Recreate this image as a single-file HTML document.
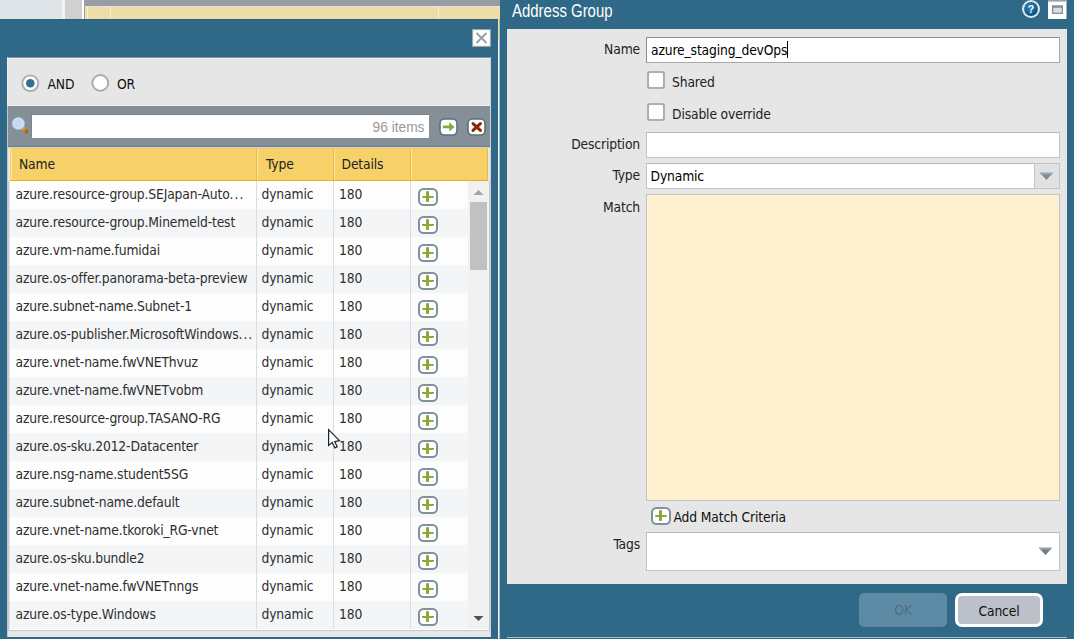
<!DOCTYPE html><html><head><meta charset="utf-8"><title>Address Group</title><style>
*{box-sizing:border-box;margin:0;padding:0}
html,body{width:1074px;height:639px;overflow:hidden;background:#dcdcdc}
body{position:relative;font-family:"DejaVu Sans Condensed","DejaVu Sans","Liberation Sans",sans-serif;font-size:13.75px;font-stretch:condensed;letter-spacing:-.15px;color:#2e2e2e}
.a{position:absolute}
.t{position:absolute;white-space:nowrap;line-height:16px;height:16px}
.lbl{position:absolute;white-space:nowrap;line-height:16px;height:16px;text-align:right;width:120px;left:520px;color:#222}
.inp{position:absolute;background:#fff;border:1px solid #c4c4c4;border-top-color:#b9b9b9}
.row{position:absolute;left:10px;width:458px;height:28px}
.row.e{background:#fdfdfd}.row.o{background:#f4f5f7}
.row .t{top:5px}
.plus{position:absolute;width:20px;height:18px;border:2px solid #7f929e;border-radius:5.5px;background:#fff}
.plus:before{content:"";position:absolute;left:1.9px;top:5.6px;width:12.2px;height:2.5px;background:#8fa737;border-radius:1px}
.plus:after{content:"";position:absolute;left:6.3px;top:1.3px;width:3.2px;height:11.2px;background:#8fa737;border-radius:1px}
.vl{position:absolute;width:1px;background:#d9dde1}
</style></head><body>
<div class="a" style="left:0;top:0;width:62px;height:40px;background:#dfe4e9"></div>
<div class="a" style="left:62px;top:0;width:3px;height:40px;background:#f2f2f2"></div>
<div class="a" style="left:65px;top:0;width:17px;height:40px;background:#d0d0d0"></div>
<div class="a" style="left:82px;top:0;width:2px;height:40px;background:#fff"></div>
<div class="a" style="left:83.5px;top:0;width:1.5px;height:40px;background:#9a9fa8"></div>
<div class="a" style="left:85px;top:0;width:420px;height:6px;background:#979ca5"></div>
<div class="a" style="left:85px;top:5.5px;width:420px;height:1.5px;background:#e8e4d8"></div>
<div class="a" style="left:85px;top:7px;width:420px;height:33px;background:#f0dca6"></div>
<div class="a" style="left:87px;top:7px;width:1px;height:33px;background:#f8edcf"></div>
<div class="a" style="left:110px;top:7px;width:1px;height:33px;background:#f8edcf"></div>
<div class="a" style="left:438px;top:7px;width:1px;height:33px;background:#f8edcf"></div>
<div class="a" style="left:0;top:19px;width:498px;height:620px;background:#2f6987;border-top:1px solid #28607f"></div>
<svg class="a" style="left:472px;top:29px" width="19" height="18" viewBox="0 0 19 18"><rect x="0.5" y="0.5" width="18" height="17" fill="#fff" stroke="#9da6ae" stroke-width="1.3"/><path d="M4.5 4 L14.5 14 M14.5 4 L4.5 14" stroke="#97a2ac" stroke-width="2.1" fill="none"/></svg>
<div class="a" style="left:7px;top:57px;width:484px;height:580px;background:#e6e6e6;border-left:1px solid #efefef;border-right:1px solid #d0d3d8;border-top:1px solid #8497a3"></div>
<div class="a" style="left:8px;top:58px;width:482px;height:1px;background:#f0f0f0"></div>
<div class="a" style="left:8px;top:105px;width:482px;height:1px;background:#f0f0f0"></div>
<div class="a" style="left:7px;top:106px;width:1px;height:531px;background:#c4c7ce"></div>
<svg class="a" style="left:21px;top:74px" width="19" height="19" viewBox="0 0 19 19"><circle cx="9.3" cy="9.2" r="7.9" fill="#fff" stroke="#a0abb3" stroke-width="1.8"/><circle cx="9.3" cy="9.2" r="4.3" fill="#37708f"/></svg>
<div class="t" style="left:47.5px;top:76px;color:#111">AND</div>
<svg class="a" style="left:91px;top:74px" width="19" height="19" viewBox="0 0 19 19"><circle cx="9.3" cy="8.9" r="7.9" fill="#fff" stroke="#a0abb3" stroke-width="1.8"/></svg>
<div class="t" style="left:117px;top:76px;color:#111">OR</div>
<div class="a" style="left:8px;top:106px;width:482px;height:41px;background:#858f98;border-bottom:1px solid #6f7a84"></div>
<div class="a" style="left:8px;top:147px;width:482px;height:1px;background:#d5d8dc"></div>
<svg class="a" style="left:10px;top:114px" width="20" height="22" viewBox="0 0 20 22"><defs><radialGradient id="lg" cx="50%" cy="45%" r="60%"><stop offset="0" stop-color="#d6e6f8"/><stop offset="0.7" stop-color="#c4daf4"/><stop offset="1" stop-color="#a9c6ea"/></radialGradient><linearGradient id="hg" x1="0" y1="0" x2="1" y2="1"><stop offset="0" stop-color="#d9a05a"/><stop offset="1" stop-color="#a8671c"/></linearGradient></defs><path d="M13.2 14.4 L16.4 17.3" stroke="url(#hg)" stroke-width="4.3" stroke-linecap="round"/><circle cx="8.4" cy="9.5" r="6.1" fill="#c3d8f3" stroke="#b4ccee" stroke-width="0.7"/><circle cx="8.4" cy="9.5" r="4.7" fill="none" stroke="#cfe1f7" stroke-width="1.2"/></svg>
<div class="a" style="left:31px;top:114px;width:398px;height:24.3px;background:#fff;border-top:1px solid #79838c;border-left:1px solid #79838c"></div>
<div class="t" style="left:340px;width:84.5px;text-align:right;top:120px;font-family:'Liberation Sans',sans-serif;font-stretch:normal;font-size:13.75px;letter-spacing:0;color:#999">96 items</div>
<svg class="a" style="left:439px;top:118px" width="19" height="18" viewBox="0 0 19 18"><rect x="1" y="1" width="17" height="16" rx="4.5" fill="#fff" stroke="#587280" stroke-width="1.6"/><path d="M3.8 8.9 H11" stroke="#8ba63a" stroke-width="2.7"/><path d="M10.2 4.2 L15.6 8.9 L10.2 13.6 Z" fill="#8ba63a"/></svg>
<svg class="a" style="left:467px;top:118px" width="19" height="18" viewBox="0 0 19 18"><rect x="1" y="1" width="17" height="16" rx="4.5" fill="#fff" stroke="#587280" stroke-width="1.6"/><path d="M6 5.6 L13.4 12.4 M13.4 5.6 L6 12.4" stroke="#8b2703" stroke-width="3" stroke-linecap="round"/></svg>
<div class="a" style="left:10px;top:148px;width:478px;height:33px;background:#f6d169;border-bottom:1.5px solid #f0ab1e;border-top:1px solid #f3c75a"></div>
<div class="a" style="left:11px;top:149px;width:1px;height:31px;background:#fbe6a8"></div>
<div class="a" style="left:257px;top:149px;width:1px;height:31px;background:#fbe6a8"></div>
<div class="a" style="left:334px;top:149px;width:1px;height:31px;background:#fbe6a8"></div>
<div class="a" style="left:411px;top:149px;width:1px;height:31px;background:#fbe6a8"></div>
<div class="a" style="left:256px;top:149px;width:1px;height:31px;background:#eeb93c"></div>
<div class="a" style="left:333px;top:149px;width:1px;height:31px;background:#eeb93c"></div>
<div class="a" style="left:410px;top:149px;width:1px;height:31px;background:#eeb93c"></div>
<div class="a" style="left:487px;top:149px;width:1px;height:31px;background:#eeb93c"></div>
<div class="t" style="left:19px;top:156px;color:#222">Name</div>
<div class="t" style="left:266px;top:156px;color:#222">Type</div>
<div class="t" style="left:341.5px;top:156px;color:#222">Details</div>
<div class="row e" style="top:181px"><div class="t" style="left:5.5px">azure.resource-group.SEJapan-Auto<span style="letter-spacing:1px">...</span></div><div class="t" style="left:251.5px">dynamic</div><div class="t" style="left:329px">180</div><div class="plus" style="left:408px;top:7px"></div></div>
<div class="row o" style="top:209px"><div class="t" style="left:5.5px">azure.resource-group.Minemeld-test</div><div class="t" style="left:251.5px">dynamic</div><div class="t" style="left:329px">180</div><div class="plus" style="left:408px;top:7px"></div></div>
<div class="row e" style="top:237px"><div class="t" style="left:5.5px">azure.vm-name.fumidai</div><div class="t" style="left:251.5px">dynamic</div><div class="t" style="left:329px">180</div><div class="plus" style="left:408px;top:7px"></div></div>
<div class="row o" style="top:265px"><div class="t" style="left:5.5px">azure.os-offer.panorama-beta-preview</div><div class="t" style="left:251.5px">dynamic</div><div class="t" style="left:329px">180</div><div class="plus" style="left:408px;top:7px"></div></div>
<div class="row e" style="top:293px"><div class="t" style="left:5.5px">azure.subnet-name.Subnet-1</div><div class="t" style="left:251.5px">dynamic</div><div class="t" style="left:329px">180</div><div class="plus" style="left:408px;top:7px"></div></div>
<div class="row o" style="top:321px"><div class="t" style="left:5.5px">azure.os-publisher.MicrosoftWindows<span style="letter-spacing:1px">...</span></div><div class="t" style="left:251.5px">dynamic</div><div class="t" style="left:329px">180</div><div class="plus" style="left:408px;top:7px"></div></div>
<div class="row e" style="top:349px"><div class="t" style="left:5.5px">azure.vnet-name.fwVNEThvuz</div><div class="t" style="left:251.5px">dynamic</div><div class="t" style="left:329px">180</div><div class="plus" style="left:408px;top:7px"></div></div>
<div class="row o" style="top:377px"><div class="t" style="left:5.5px">azure.vnet-name.fwVNETvobm</div><div class="t" style="left:251.5px">dynamic</div><div class="t" style="left:329px">180</div><div class="plus" style="left:408px;top:7px"></div></div>
<div class="row e" style="top:405px"><div class="t" style="left:5.5px">azure.resource-group.TASANO-RG</div><div class="t" style="left:251.5px">dynamic</div><div class="t" style="left:329px">180</div><div class="plus" style="left:408px;top:7px"></div></div>
<div class="row o" style="top:433px"><div class="t" style="left:5.5px">azure.os-sku.2012-Datacenter</div><div class="t" style="left:251.5px">dynamic</div><div class="t" style="left:329px">180</div><div class="plus" style="left:408px;top:7px"></div></div>
<div class="row e" style="top:461px"><div class="t" style="left:5.5px">azure.nsg-name.student5SG</div><div class="t" style="left:251.5px">dynamic</div><div class="t" style="left:329px">180</div><div class="plus" style="left:408px;top:7px"></div></div>
<div class="row o" style="top:489px"><div class="t" style="left:5.5px">azure.subnet-name.default</div><div class="t" style="left:251.5px">dynamic</div><div class="t" style="left:329px">180</div><div class="plus" style="left:408px;top:7px"></div></div>
<div class="row e" style="top:517px"><div class="t" style="left:5.5px">azure.vnet-name.tkoroki_RG-vnet</div><div class="t" style="left:251.5px">dynamic</div><div class="t" style="left:329px">180</div><div class="plus" style="left:408px;top:7px"></div></div>
<div class="row o" style="top:545px"><div class="t" style="left:5.5px">azure.os-sku.bundle2</div><div class="t" style="left:251.5px">dynamic</div><div class="t" style="left:329px">180</div><div class="plus" style="left:408px;top:7px"></div></div>
<div class="row e" style="top:573px"><div class="t" style="left:5.5px">azure.vnet-name.fwVNETnngs</div><div class="t" style="left:251.5px">dynamic</div><div class="t" style="left:329px">180</div><div class="plus" style="left:408px;top:7px"></div></div>
<div class="row o" style="top:601px"><div class="t" style="left:5.5px">azure.os-type.Windows</div><div class="t" style="left:251.5px">dynamic</div><div class="t" style="left:329px">180</div><div class="plus" style="left:408px;top:7px"></div></div>
<div class="vl" style="left:256px;top:181px;height:448px"></div>
<div class="vl" style="left:333px;top:181px;height:448px"></div>
<div class="vl" style="left:410px;top:181px;height:448px"></div>
<div class="a" style="left:468px;top:181px;width:21px;height:448px;background:#f1f1f1"></div>
<div class="a" style="left:470px;top:202px;width:17px;height:68px;background:#c1c1c1"></div>
<svg class="a" style="left:473px;top:189px" width="11" height="7" viewBox="0 0 11 7"><path d="M0.5 6 L5.5 1 L10.5 6 Z" fill="#a3a3a3"/></svg>
<svg class="a" style="left:473px;top:615px" width="11" height="7" viewBox="0 0 11 7"><path d="M0.5 1 L5.5 6 L10.5 1 Z" fill="#505050"/></svg>
<div class="a" style="left:9px;top:629px;width:481px;height:1px;background:#fff"></div>
<div class="a" style="left:8px;top:630px;width:482px;height:1px;background:#c6c8ce"></div>
<div class="a" style="left:8px;top:181px;width:1px;height:450px;background:#c6c8ce"></div>
<div class="a" style="left:489px;top:181px;width:1px;height:450px;background:#c6c8ce"></div>
<div class="a" style="left:498px;top:40px;width:1px;height:599px;background:#f3f3f3"></div>
<div class="a" style="left:499px;top:40px;width:1px;height:599px;background:#a9bac5"></div>
<div class="a" style="left:498px;top:19px;width:1px;height:21px;background:#f0dca6"></div>
<div class="a" style="left:499px;top:19px;width:1px;height:21px;background:#b9b79a"></div>
<div class="a" style="left:500px;top:0;width:574px;height:639px;background:#2f6987"></div>
<div class="a" style="left:512px;top:-1.5px;height:24px;line-height:24px;font-family:'Liberation Sans',sans-serif;font-stretch:normal;font-size:19px;letter-spacing:0;color:#fff;white-space:nowrap;transform-origin:0 0;transform:scaleX(.787)">Address Group</div>
<svg class="a" style="left:1021px;top:0" width="20" height="19" viewBox="0 0 20 19"><defs><radialGradient id="hb" cx="40%" cy="35%" r="70%"><stop offset="0" stop-color="#2f86bd"/><stop offset="1" stop-color="#0b4a78"/></radialGradient></defs><circle cx="10" cy="9" r="9" fill="#dbe6f1"/><circle cx="10" cy="9" r="6.9" fill="url(#hb)"/><text x="10" y="12.7" text-anchor="middle" font-family="Liberation Sans, sans-serif" font-weight="bold" font-size="10.5" fill="#fff">?</text></svg>
<svg class="a" style="left:1048px;top:0" width="19" height="19" viewBox="0 0 19 19"><rect x="0" y="0" width="19" height="19" fill="#fff"/><rect x="0" y="0" width="19" height="1.6" fill="#9aa0a8"/><rect x="18" y="0" width="1" height="19" fill="#a7adb4"/><rect x="4.6" y="6.3" width="9.8" height="7" fill="#dadde2" stroke="#858e9b" stroke-width="1.3"/><rect x="4" y="5.5" width="11" height="2.2" fill="#808a97"/></svg>
<div class="a" style="left:507px;top:29px;width:560px;height:554.5px;background:#e6e6e6"></div>
<div class="lbl" style="top:41px">Name</div>
<div class="inp" style="left:646px;top:37px;width:414px;height:26px;border-color:#8f8f8f #a8a8a8 #a8a8a8 #8f8f8f"></div>
<div class="t" style="left:651px;top:42px;color:#000">azure_staging_devOps</div>
<div class="a" style="left:787px;top:41px;width:1px;height:17px;background:#000"></div>
<div class="a" style="left:647px;top:71px;width:18px;height:18px;background:#fff;border:2px solid #a4b0b9;border-radius:3px"></div>
<div class="t" style="left:672px;top:74px;color:#222">Shared</div>
<div class="a" style="left:647px;top:103px;width:18px;height:18px;background:#fff;border:2px solid #a4b0b9;border-radius:3px"></div>
<div class="t" style="left:672px;top:106px;color:#222">Disable override</div>
<div class="lbl" style="top:136px">Description</div>
<div class="inp" style="left:646px;top:132px;width:414px;height:26px"></div>
<div class="lbl" style="top:167px">Type</div>
<div class="inp" style="left:646px;top:163px;width:414px;height:26px"></div>
<div class="a" style="left:1034px;top:163px;width:26px;height:26px;background:#e1e1e1;border:1px solid #c4c4c4"></div>
<svg class="a" style="left:1039px;top:172px" width="15" height="9" viewBox="0 0 15 9"><path d="M0.8 0.8 L14.2 0.8 L7.5 8 Z" fill="#7e8c99"/><path d="M0.8 0.8 L14.2 0.8 L12.5 2.4 L2.5 2.4Z" fill="#9aa7b2"/></svg>
<div class="t" style="left:650.5px;top:168px;color:#000">Dynamic</div>
<div class="lbl" style="top:199px">Match</div>
<div class="a" style="left:646px;top:194px;width:414px;height:307px;background:#fff1d0;border:1px solid #c3c3c3"></div>
<div class="plus" style="left:651px;top:507px"></div>
<div class="t" style="left:673.5px;top:509px;color:#111">Add Match Criteria</div>
<div class="lbl" style="top:536px">Tags</div>
<div class="inp" style="left:646px;top:532px;width:414px;height:38.5px"></div>
<svg class="a" style="left:1038px;top:547px" width="15" height="9" viewBox="0 0 15 9"><path d="M0.8 0.8 L14.2 0.8 L7.5 8 Z" fill="#717b85"/><path d="M0.8 0.8 L14.2 0.8 L12.5 2.4 L2.5 2.4Z" fill="#99a3ad"/></svg>
<div class="a" style="left:859px;top:593px;width:88px;height:34px;background:#5d8aa5;border-radius:5px;text-align:center;line-height:34px;color:#4d6f85">OK</div>
<div class="a" style="left:955px;top:593px;width:88px;height:34px;background:#bcc0c9;border:3px solid #fff;border-radius:7px;text-align:center;line-height:30px;color:#111">Cancel</div>
<div class="a" style="left:507px;top:637px;width:560px;height:1px;background:#a8bfcc"></div>
<svg class="a" style="left:326px;top:426.6px" width="16" height="24" viewBox="0 0 16 24"><path d="M2.6 2.6 L2.6 18.4 L6.2 15.4 L8.9 20.9 L11.2 19.8 L8.7 14.6 L13.4 13.6 Z" fill="#fff" stroke="#1b2030" stroke-width="1.2" stroke-linejoin="miter"/></svg>
</body></html>
